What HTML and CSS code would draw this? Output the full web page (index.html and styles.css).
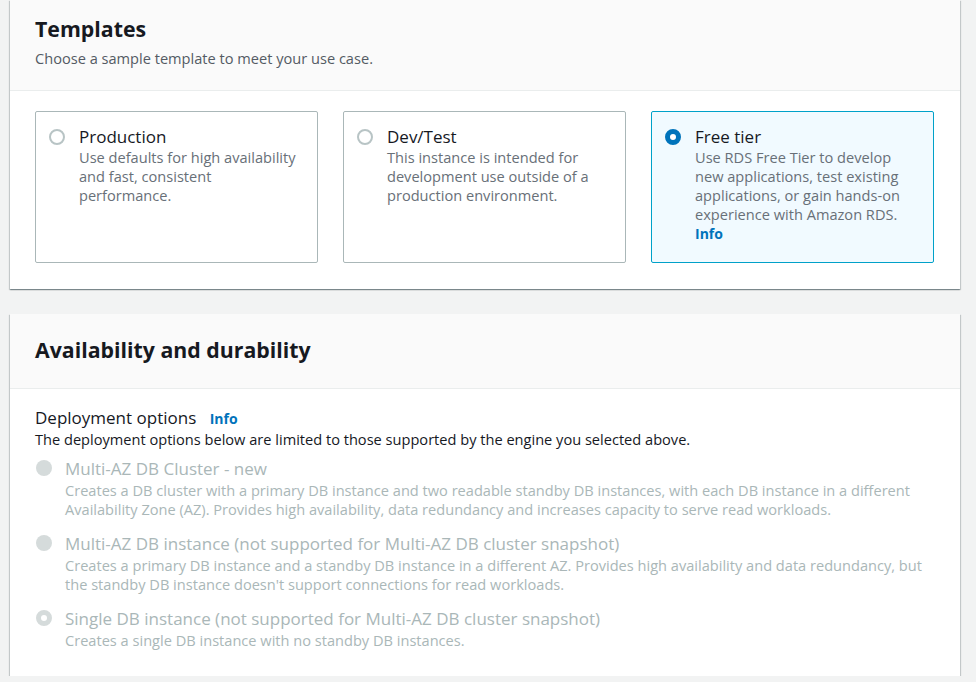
FILE: index.html
```html
<!DOCTYPE html>
<html lang="en">
<head>
<meta charset="utf-8">
<title>Create database</title>
<link rel="stylesheet" href="styles.css">
</head>
<body>
<div class="page">
  <section class="panel panel-first">
    <header class="panel-header">
      <h2 class="panel-title">Templates</h2>
      <p class="panel-desc">Choose a sample template to meet your use case.</p>
    </header>
    <div class="panel-body">
      <div class="tiles">
        <div class="tile">
          <span class="radio"></span>
          <div class="tile-text">
            <div class="tile-title">Production</div>
            <div class="tile-desc">Use defaults for high availability and fast, consistent performance.</div>
          </div>
        </div>
        <div class="tile">
          <span class="radio"></span>
          <div class="tile-text">
            <div class="tile-title">Dev/Test</div>
            <div class="tile-desc">This instance is intended for development use outside of a production environment.</div>
          </div>
        </div>
        <div class="tile tile-selected">
          <span class="radio radio-checked"></span>
          <div class="tile-text">
            <div class="tile-title">Free tier</div>
            <div class="tile-desc">Use RDS Free Tier to develop new applications, test existing applications, or gain hands-on experience with Amazon RDS.<br><a class="info" href="#">Info</a></div>
          </div>
        </div>
      </div>
    </div>
  </section>

  <section class="panel panel-second">
    <header class="panel-header panel-header-2">
      <h2 class="panel-title">Availability and durability</h2>
    </header>
    <div class="panel-body panel-body-2">
      <div class="field-label">Deployment options <a class="info info-label" href="#">Info</a></div>
      <div class="field-desc">The deployment options below are limited to those supported by the engine you selected above.</div>
      <div class="options">
        <div class="option">
          <span class="radio radio-disabled"></span>
          <div class="option-text">
            <div class="option-title">Multi-AZ DB Cluster - new</div>
            <div class="option-desc">Creates a DB cluster with a primary DB instance and two readable standby DB instances, with each DB instance in a different Availability Zone (AZ). Provides high availability, data redundancy and increases capacity to serve read workloads.</div>
          </div>
        </div>
        <div class="option">
          <span class="radio radio-disabled"></span>
          <div class="option-text">
            <div class="option-title">Multi-AZ DB instance (not supported for Multi-AZ DB cluster snapshot)</div>
            <div class="option-desc">Creates a primary DB instance and a standby DB instance in a different AZ. Provides high availability and data redundancy, but the standby DB instance doesn't support connections for read workloads.</div>
          </div>
        </div>
        <div class="option">
          <span class="radio radio-disabled radio-disabled-checked"></span>
          <div class="option-text">
            <div class="option-title">Single DB instance (not supported for Multi-AZ DB cluster snapshot)</div>
            <div class="option-desc">Creates a single DB instance with no standby DB instances.</div>
          </div>
        </div>
      </div>
    </div>
  </section>
</div>
</body>
</html>
```

FILE: styles.css
```css
* { box-sizing: border-box; }
html, body {
  margin: 0;
  padding: 0;
  background: #f2f3f3;
  font-family: "Open Sans", "Noto Sans", sans-serif;
  color: #16191f;
}
.page {
  width: 950px;
  margin-left: 10px;
  display: flex;
  flex-direction: column;
  gap: 25px;
}
.panel {
  background: #ffffff;
  box-shadow: 0 1px 1px 0 rgba(0,28,36,0.3), 1px 1px 1px 0 rgba(0,28,36,0.15), -1px 1px 1px 0 rgba(0,28,36,0.15);
}
.panel-header {
  background: #fafafa;
  border-bottom: 1px solid #eaeded;
  padding: 15px 25px 22px;
}
.panel-header-2 {
  padding: 22px 25px 24px;
}
.panel-title {
  margin: 0;
  font-size: 21.3px;
  line-height: 28px;
  font-weight: 700;
}
.panel-desc {
  margin: 5px 0 0;
  font-size: 14.6px;
  line-height: 20px;
  color: #545b64;
}
.panel-body {
  padding: 20px 26px 26px 25px;
}
.tiles {
  display: grid;
  grid-template-columns: repeat(3, 283px);
  column-gap: 25px;
}
.tile {
  border: 1px solid #aab7b8;
  border-radius: 2px;
  padding: 13px 16px 19px 13px;
  display: flex;
  gap: 14px;
  align-items: flex-start;
}
.tile-selected {
  background: #f1faff;
  border-color: #00a1c9;
}
.radio {
  flex: none;
  width: 16px;
  height: 16px;
  border-radius: 50%;
  border: 2px solid #b8c4c5;
  background: #fff;
  margin-top: 4px;
}
.radio-checked {
  border: 5px solid #0073bb;
}
.tile-title {
  font-size: 17px;
  line-height: 23px;
}
.tile-desc {
  font-size: 14.6px;
  line-height: 19px;
  color: #687078;
}
.info {
  color: #0073bb;
  font-weight: 700;
  text-decoration: none;
  font-size: 14px;
}
.panel-body-2 {
  padding: 18px 25px 26px;
}
.field-label {
  font-size: 17px;
  line-height: 22px;
}
.info-label {
  margin-left: 9px;
}
.field-desc {
  font-size: 14.6px;
  line-height: 19px;
}
.options {
  margin-top: 7px;
  display: flex;
  flex-direction: column;
  gap: 12px;
}
.option {
  display: flex;
  gap: 13px;
  align-items: flex-start;
  padding-left: 1px;
}
.option .radio {
  margin-top: 4px;
}
.radio-disabled {
  border: none;
  background: #d5dbdb;
}
.radio-disabled-checked {
  border: 5px solid #d5dbdb;
  background: #fff;
}
.option-title {
  font-size: 17px;
  line-height: 25px;
  color: #aab7b8;
}
.option-desc {
  font-size: 14.6px;
  line-height: 19px;
  color: #aab7b8;
}
```
